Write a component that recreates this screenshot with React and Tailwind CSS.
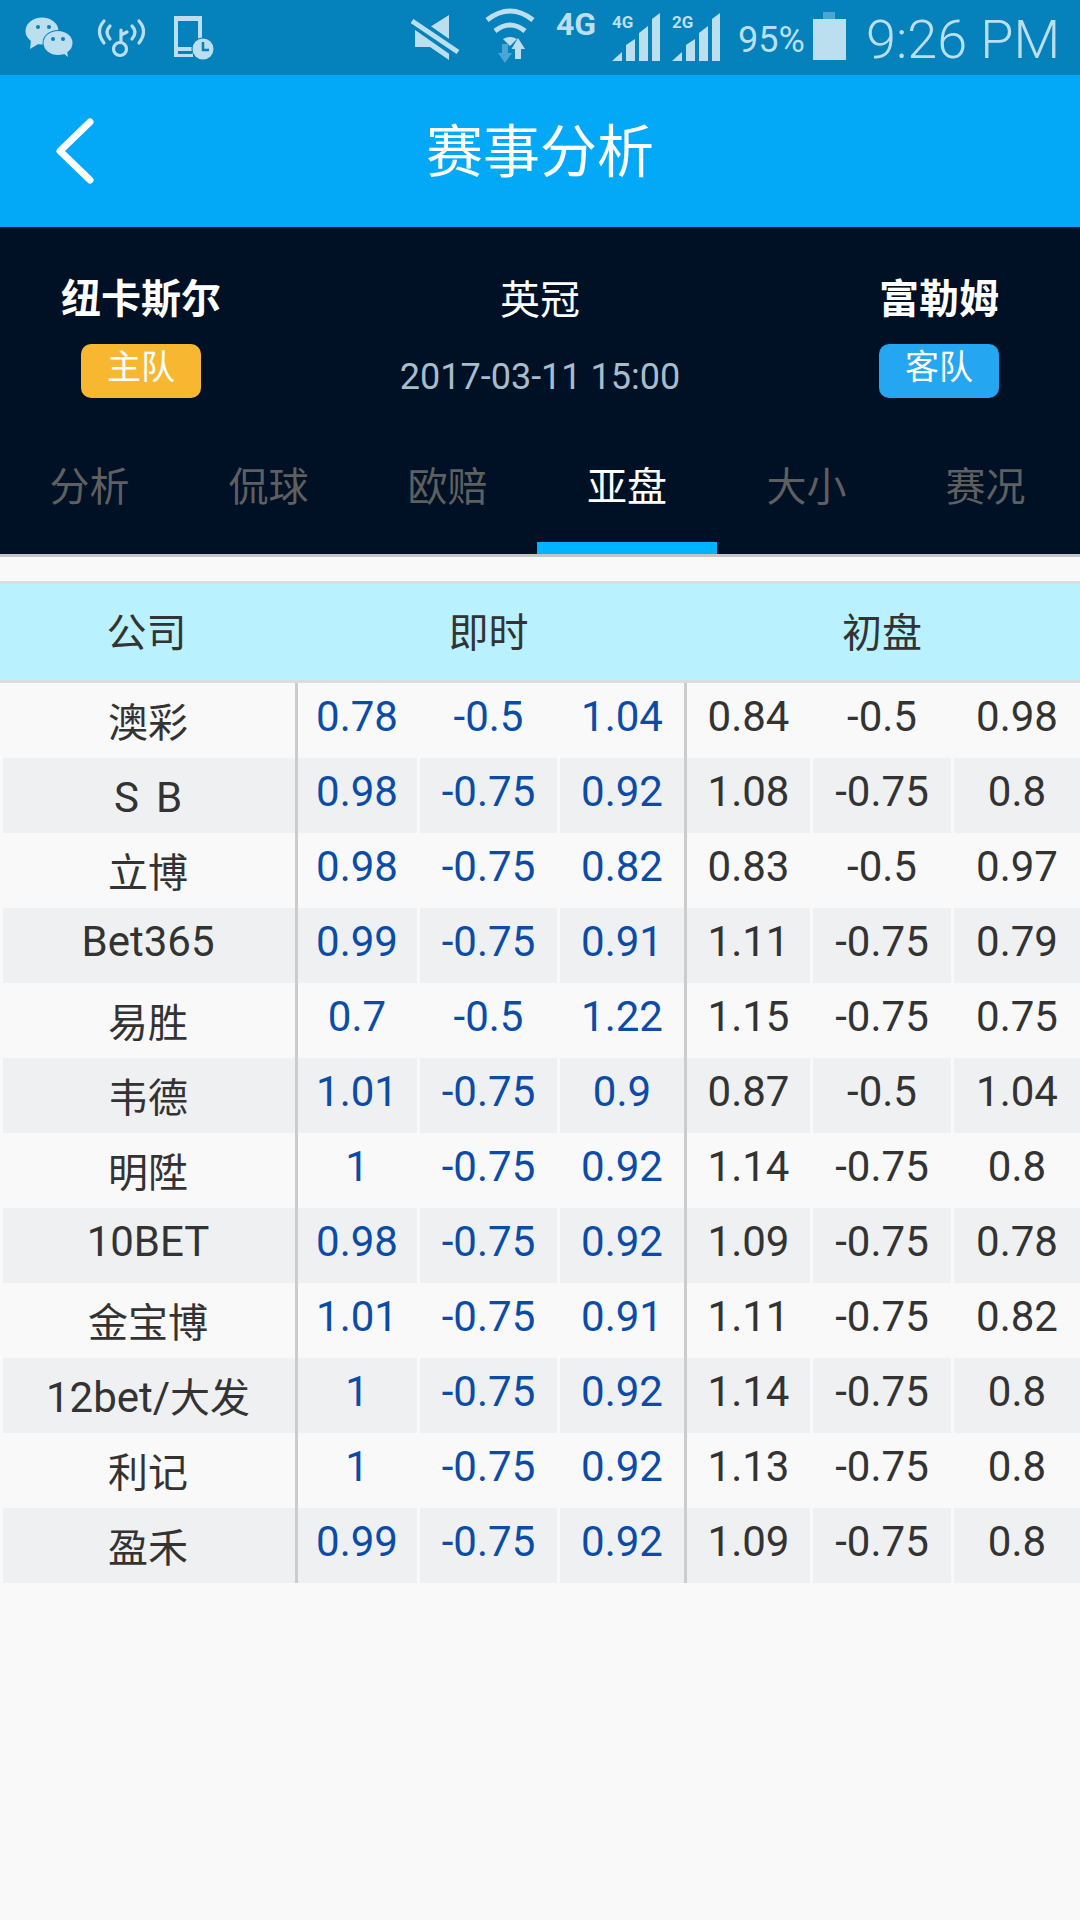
const SB = <>S<span className="inline-block w-[17px]" />B</>;
const rows = [
  [<C>澳彩</C>, "0.78", "-0.5", "1.04", "0.84", "-0.5", "0.98"],
  [SB, "0.98", "-0.75", "0.92", "1.08", "-0.75", "0.8"],
  [<C>立博</C>, "0.98", "-0.75", "0.82", "0.83", "-0.5", "0.97"],
  ["Bet365", "0.99", "-0.75", "0.91", "1.11", "-0.75", "0.79"],
  [<C>易胜</C>, "0.7", "-0.5", "1.22", "1.15", "-0.75", "0.75"],
  [<C>韦德</C>, "1.01", "-0.75", "0.9", "0.87", "-0.5", "1.04"],
  [<C>明陞</C>, "1", "-0.75", "0.92", "1.14", "-0.75", "0.8"],
  ["10BET", "0.98", "-0.75", "0.92", "1.09", "-0.75", "0.78"],
  [<C>金宝博</C>, "1.01", "-0.75", "0.91", "1.11", "-0.75", "0.82"],
  [<>12bet/<C>大发</C></>, "1", "-0.75", "0.92", "1.14", "-0.75", "0.8"],
  [<C>利记</C>, "1", "-0.75", "0.92", "1.13", "-0.75", "0.8"],
  [<C>盈禾</C>, "0.99", "-0.75", "0.92", "1.09", "-0.75", "0.8"],
];
const tabs = ["分析", "侃球", "欧赔", "亚盘", "大小", "赛况"];
const L = "#bcdff0";
const D = "#0581bc";

function C({ children }) {
  return <span className="text-[40px]">{children}</span>;
}

function Signal({ label }) {
  return (
    <div className="relative w-[48px] h-[75px]">
      <svg width="48" height="75" viewBox="0 0 48 75" fill={L}>
        <path d="M0 61L10 52V61Z" />
        <path d="M14 45L23 39V61H14Z" />
        <path d="M27 33L36 26V61H27Z" />
        <path d="M40 19L48 13V61H40Z" />
      </svg>
      <span className="absolute left-[0px] top-[13px] text-[17px] leading-[18px] font-bold text-[#bcdff0]">{label}</span>
    </div>
  );
}

function StatusBar() {
  return (
    <div className="h-[75px] bg-[#0581bc] flex items-start text-[#bcdff0]">
      <svg width="240" height="75" viewBox="0 0 240 75" fill={L} className="shrink-0">
        <ellipse cx="42" cy="31" rx="16.5" ry="13.5" />
        <path d="M31 40L30 49L40 43Z" />
        <ellipse cx="58" cy="43" rx="15.5" ry="13" fill={D} />
        <ellipse cx="58" cy="43" rx="14.5" ry="12" />
        <path d="M63 53L68 57L67 51Z" />
        <circle cx="38" cy="27" r="2" fill={D} />
        <circle cx="49" cy="27" r="2" fill={D} />
        <circle cx="53" cy="39" r="2" fill={D} />
        <circle cx="63" cy="39" r="2" fill={D} />
        <g fill="none" stroke={L} strokeWidth="3.2" strokeLinecap="round">
          <circle cx="120" cy="49" r="6.5" />
          <path d="M121 42V30M121 35L127 32" />
          <path d="M104 21Q95 31 104 43M110 26Q104 32 110 39M139 21Q148 31 139 43M132 26Q138 32 132 39" />
        </g>
        <path fillRule="evenodd" d="M174 16H202V40H198V21H178V47H198V50H193V57H174ZM178 51V54H192V51Z" />
        <circle cx="203" cy="49" r="11.5" fill={D} />
        <circle cx="203" cy="49" r="10.5" />
        <path d="M203 42V50H209" fill="none" stroke={D} strokeWidth="2.5" />
      </svg>
      <svg width="320" height="75" viewBox="240 0 320 75" fill={L} className="shrink-0">
        <path d="M449 15L430 27H415V47H430L449 60Z" />
        <path d="M410 19L460 54" stroke={D} strokeWidth="12" />
        <path d="M412 21L458 52" stroke={L} strokeWidth="5" />
        <g fill="none" stroke={L} strokeWidth="5">
          <path d="M487 20Q510 2 533 20" />
          <path d="M495 31Q510 19 525 31" />
        </g>
        <path d="M503 39Q510 35 517 39L510 46Z" />
        <path d="M518 38L525 49H521V59H515V49H511.5Z" />
        <path d="M502 44H508V53H512L505 63L498 53H502Z" fill="#4ba6d3" />
      </svg>
      <span className="ml-[-4px] mt-[5px] text-[32px] leading-[38px] font-bold w-[56px] shrink-0">4G</span>
      <Signal label="4G" />
      <div className="w-[12px] shrink-0" />
      <Signal label="2G" />
      <span className="ml-[18px] mt-[19px] text-[36px] leading-[42px] w-[75px] shrink-0">95%</span>
      <svg width="33" height="75" viewBox="0 0 33 75" className="shrink-0">
        <path d="M10 12H22V19H10Z" fill="#4ba6d3" />
        <path d="M0 19H33V60H0Z" fill={L} />
      </svg>
      <span className="ml-[20px] mt-[8px] text-[54px] leading-[63px] font-light whitespace-nowrap">9:26 PM</span>
    </div>
  );
}

function Num({ w, gap, color, children }) {
  return (
    <div className={`${w} ${gap} ${color} h-full flex justify-center shrink-0 pt-[9px] text-[42px] leading-[49px]`}>
      {children}
    </div>
  );
}

export default function App() {
  return (
    <div className="w-[1080px] min-h-[1920px] bg-[#f9f9f9] text-[#333333] font-[Roboto,'Noto_Sans_CJK_SC',sans-serif]">
      <StatusBar />
      <div className="h-[152px] bg-[#03a9f7] flex items-center text-white">
        <div className="w-[180px] pl-[53px]">
          <svg width="46" height="70" viewBox="0 0 46 70" fill="none" stroke="white" strokeWidth="7" strokeLinecap="round" strokeLinejoin="round">
            <path d="M37 6L7 35L37 64" />
          </svg>
        </div>
        <div className="flex-1 text-center text-[57px] leading-[80px] pt-[4px]">赛事分析</div>
        <div className="w-[180px]" />
      </div>
      <div className="h-[327px] bg-[#001126] flex flex-col text-white">
        <div className="h-[224px] flex pt-[44px]">
          <div className="w-[282px] flex flex-col items-center">
            <div className="text-[40px] leading-[58px] font-bold">纽卡斯尔</div>
            <div className="mt-[15px] w-[120px] h-[54px] rounded-[10px] bg-[#f7b731] text-center text-[34px] leading-[46px]">主队</div>
          </div>
          <div className="flex-1 flex flex-col items-center pr-[2px]">
            <div className="text-[40px] leading-[58px] pt-[1px] h-[58px]">英冠</div>
            <div className="mt-[27px] text-[36px] leading-[42px] text-[#a9bccb]">2017-03-11 15:00</div>
          </div>
          <div className="w-[278px] mr-[2px] flex flex-col items-center">
            <div className="text-[40px] leading-[58px] font-bold">富勒姆</div>
            <div className="mt-[15px] w-[120px] h-[54px] rounded-[10px] bg-[#24a6f0] text-center text-[34px] leading-[46px]">客队</div>
          </div>
        </div>
        <div className="flex-1 flex">
          {tabs.map((t, i) => (
            <div key={t} className={i === 3
              ? "w-[180px] h-full flex justify-center pt-[8px] text-[40px] leading-[58px] text-white border-b-[12px] border-[#00b4ff]"
              : "w-[179px] h-full flex justify-center pt-[8px] text-[40px] leading-[58px] text-[#5f5f5f]"}>{t}</div>
          ))}
        </div>
      </div>
      <div className="h-[3px] bg-[#c5c5c5]" />
      <div className="h-[24px]" />
      <div className="h-[3px] bg-[#dcdcdc]" />
      <div className="h-[96px] bg-[#baf1ff] flex items-center text-[40px] leading-[58px] text-[#333333] text-center">
        <div className="w-[293px] pt-[3px]">公司</div>
        <div className="w-[391px] pt-[3px]">即时</div>
        <div className="flex-1 pt-[3px]">初盘</div>
      </div>
      <div className="h-[3px] bg-[#dcdcdc]" />
      <div>
        {rows.map((r, i) => (
          <div key={i} className="h-[75px] flex pl-[3px]">
            <div className={`w-[292px] h-full flex justify-center shrink-0 pr-[2px] text-[42px] leading-[56px] ${r[0] === "Bet365" || r[0] === "10BET" ? "pt-[6px]" : "pt-[12px]"} ${i % 2 ? "bg-[#eff0f2]" : ""}`}><div>{r[0]}</div></div>
            <div className="w-[3px] h-full bg-[#cccccc] shrink-0" />
            <Num w="w-[119px] pr-[1px]" gap={i % 2 ? "bg-[#eff0f2]" : ""} color="text-[#0a4ca8]">{r[1]}</Num>
            <div className="w-[3px] shrink-0" />
            <Num w="w-[137px]" gap={i % 2 ? "bg-[#eff0f2]" : ""} color="text-[#0a4ca8]">{r[2]}</Num>
            <div className="w-[3px] shrink-0" />
            <Num w="w-[124px]" gap={i % 2 ? "bg-[#eff0f2]" : ""} color="text-[#0a4ca8]">{r[3]}</Num>
            <div className="w-[3px] h-full bg-[#cccccc] shrink-0" />
            <Num w="w-[123px]" gap={i % 2 ? "bg-[#eff0f2]" : ""} color="text-[#333333]">{r[4]}</Num>
            <div className="w-[3px] shrink-0" />
            <Num w="w-[138px]" gap={i % 2 ? "bg-[#eff0f2]" : ""} color="text-[#333333]">{r[5]}</Num>
            <div className="w-[3px] shrink-0" />
            <Num w="w-[126px]" gap={i % 2 ? "bg-[#eff0f2]" : ""} color="text-[#333333]">{r[6]}</Num>
          </div>
        ))}
      </div>
    </div>
  );
}
